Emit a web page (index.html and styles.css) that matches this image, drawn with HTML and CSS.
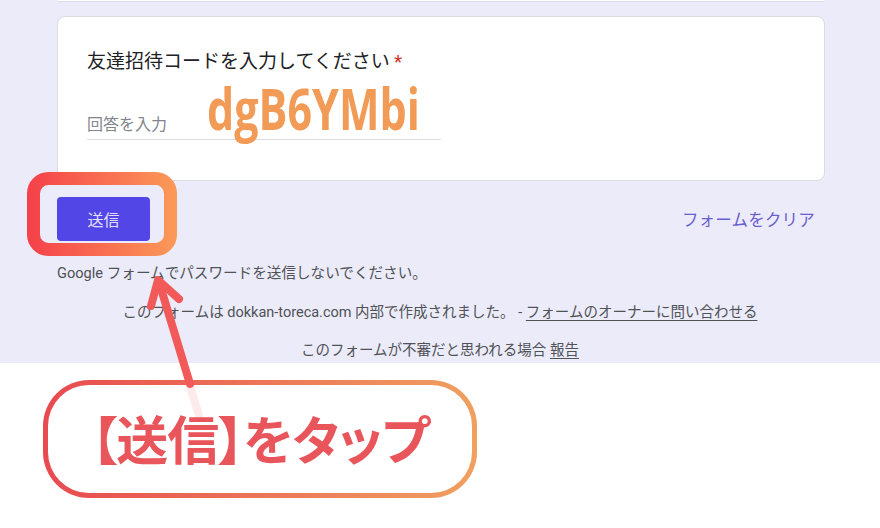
FILE: index.html
```html
<!DOCTYPE html>
<html lang="ja">
<head>
<meta charset="utf-8">
<title>友達招待コード</title>
<link rel="stylesheet" href="styles.css">
</head>
<body>
<div class="page">
  <section class="form-area">
    <div class="prev-card"></div>
    <div class="card">
      <div class="q-label">友達招待コードを入力してください<span class="req">*</span></div>
      <div class="q-input">
        <span class="placeholder">回答を入力</span>
        <span class="code">dgB6YMbi</span>
      </div>
    </div>
    <div class="actions">
      <button class="submit">送信</button>
      <span class="clear">フォームをクリア</span>
    </div>
    <p class="warn">Google フォームでパスワードを送信しないでください。</p>
    <p class="foot">このフォームは dokkan-toreca.com 内部で作成されました。 - <span class="link">フォームのオーナーに問い合わせる</span></p>
    <p class="foot foot-last">このフォームが不審だと思われる場合 <span class="link">報告</span></p>
  </section>
  <section class="note-area">
    <div class="callout">【送信】をタップ</div>
  </section>

  <svg class="frame" width="880" height="528" viewBox="0 0 880 528">
    <defs>
      <linearGradient id="fg" x1="27" y1="0" x2="177" y2="0" gradientUnits="userSpaceOnUse">
        <stop offset="0" stop-color="#f5404a"/>
        <stop offset="1" stop-color="#fb9a58"/>
      </linearGradient>
    </defs>
    <rect x="33.5" y="178.5" width="137" height="71" rx="15" ry="15" fill="none" stroke="url(#fg)" stroke-width="13"/>
    <line x1="190" y1="386" x2="199" y2="416" stroke="#f25a5a" stroke-width="8" stroke-linecap="round" opacity="0.12"/>
    <line x1="190" y1="384" x2="159" y2="282" stroke="#f25a5a" stroke-width="8" stroke-linecap="round"/>
    <polyline points="151,306 158,280 179,299" fill="none" stroke="#f25a5a" stroke-width="8" stroke-linecap="round" stroke-linejoin="round"/>
  </svg>
</div>
</body>
</html>
```

FILE: styles.css
```css
* { box-sizing: border-box; }

html, body {
  margin: 0;
  padding: 0;
  background: #ffffff;
}

body {
  font-family: Roboto, "Noto Sans CJK JP", sans-serif;
  color: #202124;
}

.page {
  position: relative;
  width: 880px;
  height: 528px;
  overflow: hidden;
}

.form-area {
  background: #ecebf9;
  height: 363px;
  padding: 0;
  display: flex;
  flex-direction: column;
}

.prev-card {
  height: 2px;
  margin: 0 55px 0 57px;
  background: #ffffff;
  border-bottom: 1px solid #dcdbe8;
  border-radius: 0 0 6px 6px;
}

.card {
  margin: 14px 55px 0 57px;
  height: 165px;
  background: #ffffff;
  border: 1px solid #dadce0;
  border-radius: 8px;
  padding: 33px 29px 0 29px;
}

.q-label {
  font-family: Roboto, "Noto Sans CJK JP", sans-serif;
  font-size: 19px;
  line-height: 24px;
  color: #202124;
}

.req {
  color: #d93025;
  margin-left: 4px;
}

.q-input {
  position: relative;
  margin-top: 37px;
  width: 354px;
  height: 29px;
  border-bottom: 1px solid #dadce0;
  display: flex;
  align-items: flex-start;
}

.placeholder {
  font-family: "Noto Sans CJK JP", sans-serif;
  font-size: 16px;
  line-height: 24px;
  color: #80868b;
}

.code {
  position: absolute;
  left: 120px;
  top: -28px;
  font-family: "Open Sans", sans-serif;
  font-weight: 700;
  font-size: 57px;
  line-height: 50px;
  color: #f29b56;
  transform: scaleX(0.755);
  transform-origin: left center;
  white-space: nowrap;
}

.actions {
  margin: 16px 65px 0 57px;
  display: flex;
  justify-content: space-between;
  align-items: center;
}

.submit {
  width: 93px;
  height: 44px;
  border: none;
  border-radius: 4px;
  background: #5246e6;
  color: #e4e0fb;
  font-family: "Noto Sans CJK JP", sans-serif;
  font-size: 16px;
  padding: 0;
}

.clear {
  font-family: "Noto Sans CJK JP", sans-serif;
  font-size: 16.5px;
  color: #6a5fcf;
  letter-spacing: 0.2px;
}

.warn {
  margin: 22px 0 0 57px;
  font-size: 14.6px;
  line-height: 20px;
  color: #4f5256;
}

.foot {
  margin: 20px 0 0 0;
  text-align: center;
  font-size: 14.5px;
  line-height: 20px;
  color: #4f5256;
}

.foot-last {
  margin-top: 18px;
}

.link {
  text-decoration: underline;
  text-underline-offset: 3px;
}

.note-area {
  padding: 17px 0 0 43px;
}

.callout {
  width: 434px;
  height: 118px;
  border: 5px solid transparent;
  border-radius: 46px;
  background:
    linear-gradient(#ffffff, #ffffff) padding-box,
    linear-gradient(90deg, #e84a50, #f0a060) border-box;
  display: flex;
  align-items: center;
  justify-content: center;
  font-family: "Noto Sans CJK JP", sans-serif;
  font-weight: 700;
  font-size: 52px;
  font-feature-settings: "palt";
  letter-spacing: -1px;
  color: #e8555b;
  padding-bottom: 4px;
}

.frame {
  position: absolute;
  left: 0;
  top: 0;
  pointer-events: none;
}
```
